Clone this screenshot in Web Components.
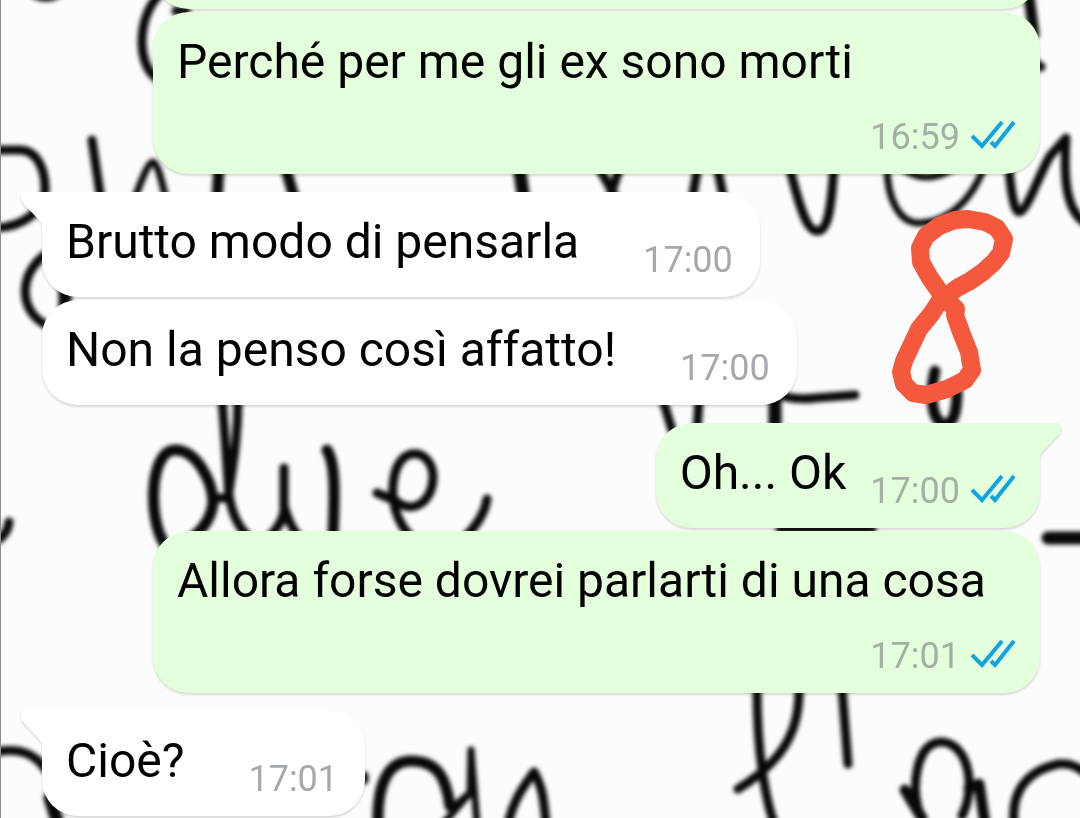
<!DOCTYPE html>
<html lang="it">
<head>
<meta charset="utf-8">
<meta name="viewport" content="width=device-width, initial-scale=1">
<title>Chat</title>
<style>
  body {
    margin: 0;
    background: #fcfcfc;
    font-family: Roboto, sans-serif;
  }
</style>
</head>
<body>
<chat-view>
  <chat-wallpaper slot="wallpaper"></chat-wallpaper>
  <chat-message out></chat-message>
  <chat-message out wide time="16:59">Perché per me gli ex sono morti</chat-message>
  <chat-message tail time="17:00">Brutto modo di pensarla</chat-message>
  <chat-message time="17:00">Non la penso così affatto!</chat-message>
  <chat-message out tail time="17:00">Oh... Ok</chat-message>
  <chat-message out wide time="17:01">Allora forse dovrei parlarti di una cosa</chat-message>
  <chat-message tail time="17:01">Cioè?</chat-message>
  <marker-eight slot="overlay"></marker-eight>
</chat-view>

<script>
class ChatView extends HTMLElement {
  constructor() {
    super();
    const shadow = this.attachShadow({ mode: 'open' });
    shadow.innerHTML = `
      <style>
        :host {
          display: block;
          position: relative;
          height: 100vh;
          overflow: hidden;
          box-sizing: border-box;
          border-left: 1px solid #8c8c8c;
        }

        .messages {
          position: relative;
          box-sizing: border-box;
          height: 100%;
          display: flex;
          flex-direction: column;
          justify-content: flex-end;
          gap: 3px;
          padding: 0 40px 2px 41px;
        }
      </style>
      <slot name="wallpaper"></slot>
      <main class="messages"><slot></slot></main>
      <slot name="overlay"></slot>
    `;
  }
}

// One message bubble: out = sent by me, wide = time on its own row
class ChatMessage extends HTMLElement {
  constructor() {
    super();
    this.attachShadow({ mode: 'open' });
  }

  connectedCallback() {
    const out = this.hasAttribute('out');
    const time = this.getAttribute('time');
    this.shadowRoot.innerHTML = `
      <style>
        :host {
          --bubble: #ffffff;
          --meta: #a5a9ac;
          display: flex;
          flex-shrink: 0;
        }

        :host([out]) {
          --bubble: #e4ffdb;
          --meta: #a5afa6;
          justify-content: flex-end;
        }

        :host([tail]) {
          margin-top: 15px;
        }

        .bubble {
          position: relative;
          box-sizing: border-box;
          display: flex;
          justify-content: space-between;
          column-gap: 64px;
          min-height: 105px;
          padding: 22px 27px 16px 24px;
          border-radius: 36px;
          background: var(--bubble);
          filter: drop-shadow(0 2px 1px rgba(0, 0, 0, 0.14));
        }

        :host([out]) .bubble {
          column-gap: 24px;
          padding-right: 24px;
        }

        :host([wide]) .bubble,
        :host(:empty) .bubble {
          flex-direction: column;
          row-gap: 15px;
          width: calc(100% - 111px);
        }

        :host([tail]:not([out])) .bubble {
          border-top-left-radius: 0;
        }

        :host([tail][out]) .bubble {
          border-top-right-radius: 0;
        }

        p {
          margin: 0;
          padding-bottom: 11px;
          font-size: 48px;
          line-height: 56px;
          color: #000;
        }

        .meta {
          align-self: flex-end;
          display: flex;
          align-items: center;
          gap: 11px;
          font-size: 36px;
          line-height: 42px;
          color: var(--meta);
        }

        .tail {
          position: absolute;
          top: 0;
          right: 100%;
          fill: var(--bubble);
        }

        :host([out]) .tail {
          right: auto;
          left: 100%;
          transform: scaleX(-1);
        }

        .ticks {
          display: block;
          padding-bottom: 6px;
          fill: none;
          stroke: #14a3e2;
          stroke-width: 4;
        }
      </style>
      <div class="bubble">
        ${this.hasAttribute('tail') ? `
          <svg class="tail" width="22" height="34" viewBox="0 0 22 34" aria-hidden="true">
            <path d="M23 0H5Q0 1 1 6Q1 8 3 11L19 28Q22 31 22 34H23Z"/>
          </svg>` : ''}
        ${time ? `
          <p><slot></slot></p>
          <div class="meta">
            <time>${time}</time>
            ${out ? `
              <svg class="ticks" width="45" height="31" viewBox="1 0 45 31" role="img" aria-label="Letto">
                <path d="M2 17L12 27L32 3M21 23L25 27L44 3"/>
              </svg>` : ''}
          </div>` : ''}
      </div>
    `;
  }
}

// Handwritten wallpaper behind the messages
class ChatWallpaper extends HTMLElement {
  constructor() {
    super();
    const shadow = this.attachShadow({ mode: 'open' });
    shadow.innerHTML = `
      <style>
        :host {
          position: absolute;
          inset: 0;
          display: block;
        }

        svg {
          display: block;
          width: 100%;
          height: 100%;
        }

        .ink {
          fill: none;
          stroke: #080808;
          stroke-width: 9;
          stroke-linecap: round;
          stroke-linejoin: round;
          filter: blur(2px);
        }

        .thick { stroke-width: 13; }
        .heavy { stroke-width: 11; }
        .thin { stroke-width: 7; }
      </style>
      <svg viewBox="1 0 1079 818" preserveAspectRatio="xMinYMin slice" aria-hidden="true">
        <g class="ink">
          <!-- top line -->
          <path class="thin" d="M34 -5Q46 1 58 -5"/>
          <path d="M158 -4C138 18 136 62 156 78"/>
          <path d="M176 11H186"/>
          <path class="heavy" d="M1029 -4L1034 34"/>
          <path d="M1034 62L1041 67"/>

          <!-- first row of writing -->
          <path d="M-4 150H20C38 150 46 172 45 192C43 210 24 227 -4 228"/>
          <path d="M92 140L101 200"/>
          <path class="thin" d="M135 198Q148 161 153 162Q158 162 166 200"/>
          <path class="heavy" d="M219 166L217 200"/>
          <path class="heavy" d="M285 166L295 200"/>
          <path class="thick" d="M519 166L524 200"/>
          <path d="M598 166L617 200M620 166L609 200"/>
          <path d="M698 166L692 200M717 166L724 200"/>
          <path d="M789 166C796 190 804 231 817 231C831 232 832 190 834 166"/>
          <path class="thin" d="M887 166C887 200 900 224 920 223C950 222 972 198 983 170M902 168Q926 186 954 168"/>
          <path d="M1009 170C1011 190 1014 212 1019 212C1027 212 1040 172 1050 156L1066 138C1064 170 1064 208 1084 222"/>

          <!-- letter cut by the second group -->
          <path d="M46 254C18 274 18 312 48 326"/>
          <path class="thick" d="M65 288V310"/>

          <!-- middle row -->
          <path class="heavy" d="M165 545C147 518 150 450 175 450C198 450 213 484 213 503C211 520 202 530 192 538"/>
          <path d="M222 398L228 480C228 505 236 526 250 538M238 398C238 440 232 470 228 498L213 498"/>
          <path d="M268 538Q281 526 284 512V468M284 505Q289 526 300 538"/>
          <path class="heavy" d="M327 450C337 466 334 505 333 538"/>
          <path d="M377 493L396 501C414 516 434 500 433 475C431 450 403 444 395 473C388 500 398 524 412 538"/>
          <path d="M464 538Q484 519 487 499"/>
          <path d="M-2 540Q8 533 9 522"/>
          <path d="M663 400L672 430M699 400L697 430"/>
          <path class="thick" d="M775 398V430"/>
          <path d="M772 393Q795 401 815 398L855 395"/>
          <path class="heavy" d="M935 371C928 400 934 424 945 424C955 424 957 407 957 390"/>
          <path d="M780 529H872"/>
          <path class="thick" d="M1048 538H1084"/>

          <!-- bottom row -->
          <path d="M-4 752C18 748 34 752 46 770"/>
          <path class="thick" d="M50 798L58 824"/>
          <path d="M364 776V780"/>
          <path class="heavy" d="M378 824C377 784 388 761 411 761C438 761 446 778 450 806"/>
          <path class="thin" d="M443 824L470 793L471 750L477 824M470 793L452 808"/>
          <path d="M508 824C514 798 524 786 534 772C543 788 544 802 546 824"/>
          <path d="M757 688C757 745 763 790 774 824M799 688C800 736 778 764 738 789"/>
          <path d="M842 688L848 764"/>
          <path d="M962 816C978 783 966 741 940 742C916 744 912 786 918 808"/>
          <path class="heavy" d="M905 790L922 818M969 788L979 784L985 824"/>
          <path d="M1014 824C1010 780 1040 768 1058 764Q1072 762 1084 772"/>
        </g>
      </svg>
    `;
  }
}

// Red hand-drawn figure over the conversation
class MarkerEight extends HTMLElement {
  constructor() {
    super();
    const shadow = this.attachShadow({ mode: 'open' });
    shadow.innerHTML = `
      <style>
        :host {
          position: absolute;
          top: 208px;
          right: 66px;
          display: block;
        }

        svg {
          display: block;
          fill: none;
          stroke: #f5593d;
          stroke-width: 18;
          stroke-linecap: round;
          stroke-linejoin: round;
        }
      </style>
      <svg width="124" height="198" viewBox="890 208 124 198" role="img" aria-label="Otto">
        <path d="M956 309L944 298L930 278L921 262L920 248L926 236L939 226L955 220L968 219L985 222L997 228L1004 239L1001 253L994 262L983 272L970 281L957 288L939 302L932 313L919 329L904 361L901 372L904 384L913 393L926 395L947 389L965 380L972 370L969 352L961 332L955 315Z"/>
      </svg>
    `;
  }
}

customElements.define('chat-view', ChatView);
customElements.define('chat-message', ChatMessage);
customElements.define('chat-wallpaper', ChatWallpaper);
customElements.define('marker-eight', MarkerEight);
</script>
</body>
</html>
